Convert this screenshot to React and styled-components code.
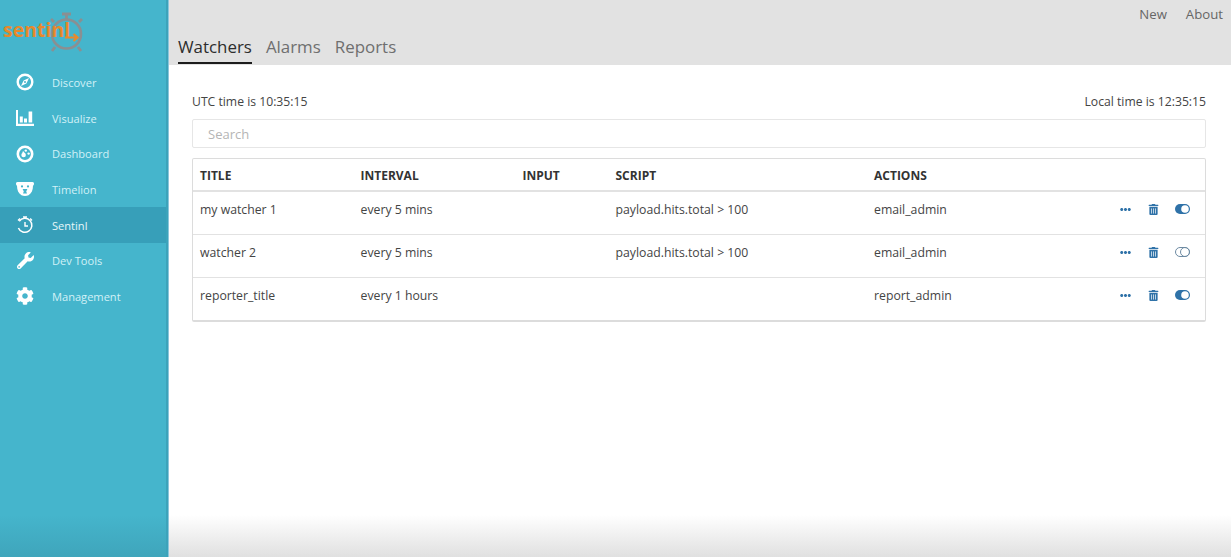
import React from 'react';
import styled, { createGlobalStyle } from 'styled-components';
import { FaWrench, FaCog, FaTrashAlt, FaEllipsisH } from 'react-icons/fa';

const GlobalStyle = createGlobalStyle`
  html, body {
    margin: 0;
    height: 100%;
    overflow: hidden;
    background: #fff;
    font-family: "Open Sans", "Liberation Sans", sans-serif;
  }
`;

const Page = styled.div`
  display: flex;
  height: 557px;
  position: relative;
`;

const Sidebar = styled.nav`
  width: 168px;
  flex: none;
  box-sizing: border-box;
  background: linear-gradient(#45b5cc 0, #45b5cc 515px, #3fa5bb 557px);
  border-right: 2px solid #3ca3ba;
  box-shadow: 1px 0 0 #8cc6dc;
  z-index: 1;
`;

const Logo = styled.div`
  position: relative;
  height: 64.5px;
`;

const LogoMark = styled.svg`
  position: absolute;
  left: 0;
  top: 0;
`;

const LogoText = styled.span`
  position: absolute;
  left: 3px;
  top: 15px;
  font-family: "Open Sans", sans-serif;
  font-size: 19.5px;
  font-weight: 700;
  line-height: 30px;
  color: #e8892b;
`;

const NavItem = styled.div`
  display: flex;
  align-items: center;
  height: 35.7px;
  padding-left: 16px;
  gap: 18px;
  font-size: 11.1px;
  color: ${(p) => (p.$active ? '#e6f7fa' : '#d2f1f7')};
  background: ${(p) => (p.$active ? '#379fb9' : 'transparent')};
`;

const NavIcon = styled.span`
  width: 18px;
  height: 18px;
  display: flex;
  align-items: center;
  justify-content: center;
  color: #fff;
  flex: none;
`;

const Main = styled.main`
  flex: 1;
  min-width: 0;
  display: flex;
  flex-direction: column;
  background: linear-gradient(#fff 0, #fff 515px, #e0e0e0 557px);
`;

const Header = styled.header`
  height: 64.5px;
  box-sizing: border-box;
  flex: none;
  background: #e2e2e2;
  display: flex;
  justify-content: space-between;
  padding: 0 8px 1px 10px;
`;

const Tabs = styled.div`
  display: flex;
  align-items: flex-end;
  gap: 14px;
`;

const Tab = styled.div`
  font-size: 16.9px;
  line-height: 24px;
  padding-bottom: 3px;
  color: ${(p) => (p.$active ? '#2d2d2d' : '#6f6f6f')};
  border-bottom: 2px solid ${(p) => (p.$active ? '#1c1c1c' : 'transparent')};
`;

const TopLinks = styled.div`
  display: flex;
  gap: 19px;
  padding-top: 5px;
`;

const TopLink = styled.a`
  font-size: 13.2px;
  line-height: 18px;
  color: #666;
`;

const Content = styled.div`
  padding: 28.5px 25px 0 24px;
`;

const TimeRow = styled.div`
  display: flex;
  justify-content: space-between;
  font-size: 12.2px;
  line-height: 17px;
  color: #444;
`;

const Search = styled.input`
  display: block;
  box-sizing: border-box;
  width: 100%;
  height: 29px;
  margin-top: 9px;
  padding: 0 15px;
  border: 1px solid #e6e6e6;
  border-radius: 2px;
  background: #fff;
  font-family: inherit;
  font-size: 13px;
  outline: none;
  &::placeholder {
    color: #b5b5b5;
    opacity: 1;
  }
`;

const Table = styled.div`
  margin-top: 10px;
  border: 1px solid #dcdcdc;
  border-bottom-width: 2px;
  border-radius: 2px;
`;

const Row = styled.div`
  display: grid;
  grid-template-columns: 160.5px 162px 93px 258.5px 1fr auto;
  align-items: center;
  box-sizing: border-box;
  height: ${(p) => (p.$head ? '33px' : p.$last ? '42px' : '43px')};
  padding: ${(p) => (p.$head ? '2px 15px 0 7px' : '0 15px 8px 7px')};
  border-bottom: ${(p) => (p.$last ? 'none' : '1px solid #e2e2e2')};
  border-bottom-width: ${(p) => (p.$head ? '2px' : '1px')};
  font-size: ${(p) => (p.$head ? '12px' : '12.25px')};
  font-weight: ${(p) => (p.$head ? 700 : 400)};
  color: ${(p) => (p.$head ? '#333' : '#444')};
  text-transform: ${(p) => (p.$head ? 'uppercase' : 'none')};
`;

const Actions = styled.div`
  display: flex;
  align-items: center;
  gap: 14px;
  color: #2f72a8;
`;

const ActionIcon = styled.span`
  width: ${(p) => (p.$wide ? '16px' : '14px')};
  display: flex;
  justify-content: center;
`;

const Toggle = ({ on }) => (
  <svg width="15" height="10" viewBox="0 0 15 10">
    {on ? (
      <>
        <rect x="0" y="0" width="15" height="10" rx="5" fill="#2f72a8" />
        <circle cx="10" cy="5" r="3.8" fill="#fff" />
      </>
    ) : (
      <>
        <rect x="0.5" y="0.5" width="14" height="9" rx="4.5" fill="none" stroke="#6e8ba3" />
        <circle cx="10" cy="5" r="4.5" fill="none" stroke="#6e8ba3" />
      </>
    )}
  </svg>
);

const CompassIcon = () => (
  <svg width="18" height="18" viewBox="0 0 18 18">
    <circle cx="9" cy="9" r="7.3" fill="none" stroke="#fff" strokeWidth="2.4" />
    <path d="M13 5 10.4 10.4 5 13 7.6 7.6Z" fill="#fff" />
    <circle cx="9" cy="9" r="1" fill="#45b5cc" />
  </svg>
);

const ChartIcon = () => (
  <svg width="18" height="16" viewBox="0 0 18 16">
    <path d="M0 0h2v13.8h16V16H0z" fill="#fff" />
    <path d="M3.8 6.5h3v6h-3zM8 8.5h3v4H8zM12.6 1.5h3.6v11h-3.6z" fill="#fff" />
  </svg>
);

const DashboardIcon = () => (
  <svg width="18" height="18" viewBox="0 0 18 18">
    <circle cx="9" cy="9" r="7.2" fill="none" stroke="#fff" strokeWidth="2.6" />
    <circle cx="7.6" cy="10" r="2.3" fill="#fff" />
    <path d="M6.8 6.6 8.4 9" stroke="#fff" strokeWidth="1.6" />
    <circle cx="12.6" cy="8.6" r="1.2" fill="#fff" />
    <circle cx="9.8" cy="5.6" r="1.2" fill="#fff" />
  </svg>
);

const BearIcon = () => (
  <svg width="18" height="14" viewBox="0 0 18 14">
    <path
      d="M1.5 0 H16.5 C17.6 0 18 0.8 18 1.8 C18 2.8 17.4 3.4 17 3.8 C17 8 15.6 11.6 12.5 13.2 C10.5 14.2 7.5 14.2 5.5 13.2 C2.4 11.6 1 8 1 3.8 C0.6 3.4 0 2.8 0 1.8 C0 0.8 0.4 0 1.5 0Z"
      fill="#fff"
    />
    <circle cx="6" cy="4.4" r="1.1" fill="#45b5cc" />
    <circle cx="12" cy="4.4" r="1.1" fill="#45b5cc" />
    <path d="M6.6 7h4.8L10.2 9.4 11 11.6H7L7.8 9.4z" fill="#45b5cc" />
  </svg>
);

const ClockIcon = () => (
  <svg width="18" height="18" viewBox="0 0 18 18" fill="none" stroke="#fff">
    <path d="M3.2 5.2A7 7 0 1 1 2.4 12" strokeWidth="1.5" />
    <path d="M9 6v4H12" strokeWidth="1.4" />
    <path d="M7 1h4M9 1v2M2 4.5 4 2.6M14.2 2.6l1.8 1.8" strokeWidth="1.4" />
  </svg>
);

const navItems = [
  { label: 'Discover', icon: <CompassIcon /> },
  { label: 'Visualize', icon: <ChartIcon /> },
  { label: 'Dashboard', icon: <DashboardIcon /> },
  { label: 'Timelion', icon: <BearIcon /> },
  { label: 'Sentinl', icon: <ClockIcon />, active: true },
  { label: 'Dev Tools', icon: <FaWrench size={17} /> },
  { label: 'Management', icon: <FaCog size={18} /> },
];

const watchers = [
  { title: 'my watcher 1', interval: 'every 5 mins', script: 'payload.hits.total > 100', action: 'email_admin', on: true },
  { title: 'watcher 2', interval: 'every 5 mins', script: 'payload.hits.total > 100', action: 'email_admin', on: false },
  { title: 'reporter_title', interval: 'every 1 hours', script: '', action: 'report_admin', on: true },
];

export default function App() {
  return (
    <Page>
      <GlobalStyle />
      <Sidebar>
        <Logo>
          <LogoMark width="90" height="56" viewBox="0 0 90 56" fill="none">
            <g stroke="#8a8f92">
              <circle cx="66.5" cy="34" r="14.5" strokeWidth="2.6" />
              <path d="M62 14h9M66.5 14v5M54 22l-3-3M79 22l3-3M55 47l-3 4M78 47l3 4" strokeWidth="2.8" />
            </g>
            <path d="M65 37.5H77M73.5 34 77.5 37.5 73.5 41" stroke="#e8892b" strokeWidth="2.2" />
          </LogoMark>
          <LogoText>sentinl</LogoText>
        </Logo>
        {navItems.map((item) => (
          <NavItem key={item.label} $active={item.active}>
            <NavIcon>{item.icon}</NavIcon>
            {item.label}
          </NavItem>
        ))}
      </Sidebar>
      <Main>
        <Header>
          <Tabs>
            <Tab $active>Watchers</Tab>
            <Tab>Alarms</Tab>
            <Tab>Reports</Tab>
          </Tabs>
          <TopLinks>
            <TopLink>New</TopLink>
            <TopLink>About</TopLink>
          </TopLinks>
        </Header>
        <Content>
          <TimeRow>
            <span>UTC time is 10:35:15</span>
            <span>Local time is 12:35:15</span>
          </TimeRow>
          <Search placeholder="Search" />
          <Table>
            <Row $head>
              <span>Title</span>
              <span>Interval</span>
              <span>Input</span>
              <span>Script</span>
              <span>Actions</span>
              <span />
            </Row>
            {watchers.map((w, i) => (
              <Row key={w.title} $last={i === watchers.length - 1}>
                <span>{w.title}</span>
                <span>{w.interval}</span>
                <span />
                <span>{w.script}</span>
                <span>{w.action}</span>
                <Actions>
                  <ActionIcon><FaEllipsisH size={11} /></ActionIcon>
                  <ActionIcon><FaTrashAlt size={11} /></ActionIcon>
                  <ActionIcon $wide><Toggle on={w.on} /></ActionIcon>
                </Actions>
              </Row>
            ))}
          </Table>
        </Content>
      </Main>
    </Page>
  );
}
